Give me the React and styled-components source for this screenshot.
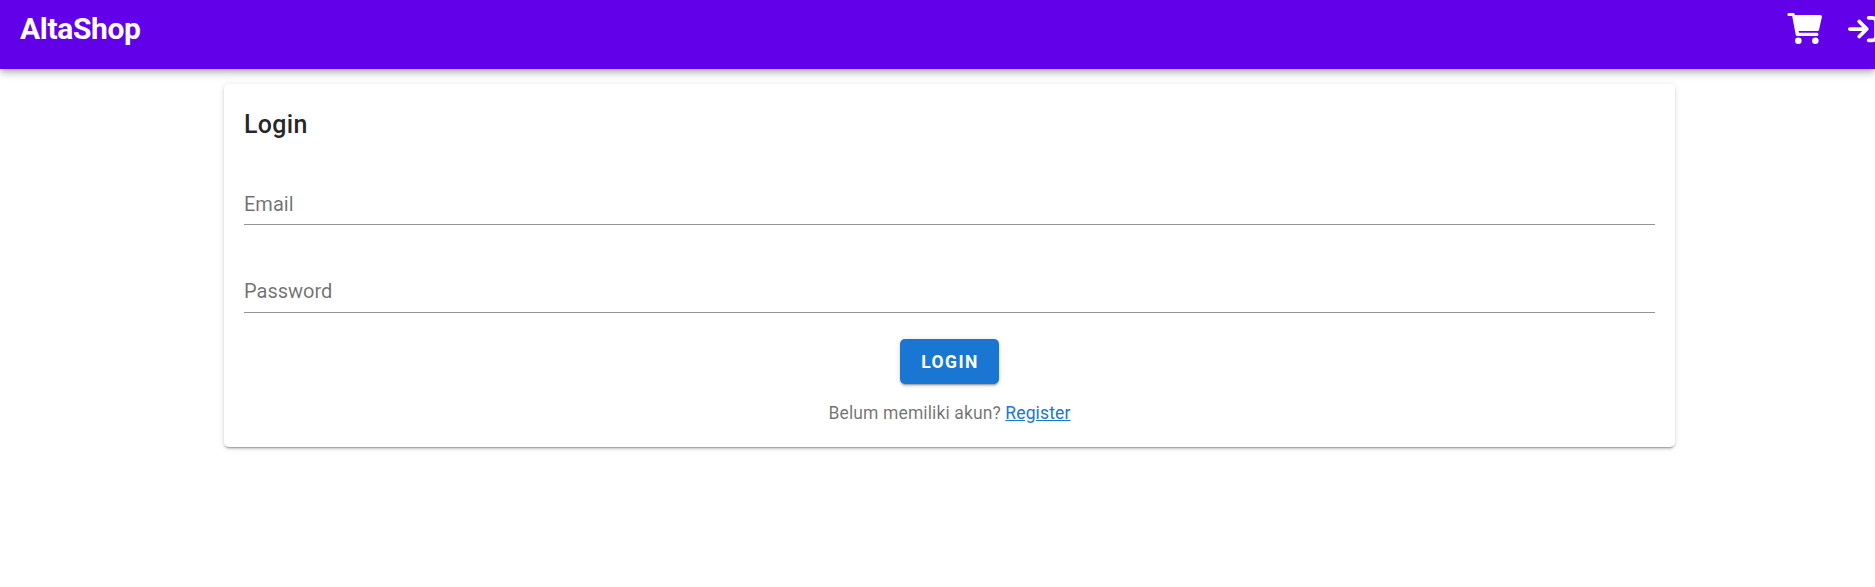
import React from "react";
import styled, { createGlobalStyle } from "styled-components";
import { FaArrowRightToBracket } from "react-icons/fa6";

const GlobalStyle = createGlobalStyle`
  *, *::before, *::after { box-sizing: border-box; }
  body {
    margin: 0;
    background: #fff;
    font-family: Roboto, "Liberation Sans", sans-serif;
  }
`;

const Page = styled.div`
  min-height: 100vh;
  overflow: hidden;
  background: #fff;
`;

const Header = styled.header`
  display: flex;
  justify-content: space-between;
  height: 69px;
  padding: 0 0 0 20px;
  background: #6200ea;
  color: #fff;
  box-shadow: 0 2.5px 5px -1.25px rgba(0, 0, 0, 0.2),
    0 5px 6.25px 0 rgba(0, 0, 0, 0.14), 0 1.25px 12.5px 0 rgba(0, 0, 0, 0.12);
`;

const Brand = styled.div`
  font-size: 30px;
  font-weight: 700;
  line-height: 57px;
  letter-spacing: -0.35px;
`;

const Actions = styled.nav`
  display: flex;
  align-items: center;
  gap: 26px;
  width: 88px;
  height: 57px;
  flex: none;
  overflow: hidden;
`;

const IconLink = styled.a`
  display: flex;
  flex: none;
  color: inherit;

  svg {
    display: block;
    height: ${({ $height }) => $height}px;
    width: ${({ $width }) => $width}px;
  }
`;

const Main = styled.main`
  display: flex;
  justify-content: center;
  padding: 15px 0 0 24px;
`;

const Card = styled.form`
  width: 1451px;
  height: 363px;
  padding: 20px;
  border-radius: 5px;
  background: #fff;
  box-shadow: 0 3px 1px -2px rgba(0, 0, 0, 0.2),
    0 2px 2px 0 rgba(0, 0, 0, 0.14), 0 1px 6px 0 rgba(0, 0, 0, 0.12);
`;

const Title = styled.h1`
  margin: 1px 0 34px;
  color: rgba(0, 0, 0, 0.87);
  font-size: 25px;
  font-weight: 500;
  line-height: 40px;
  letter-spacing: 0.3125px;
`;

const Field = styled.label`
  display: block;
  height: 46px;
  margin-bottom: ${({ $gap }) => $gap}px;
  padding-top: ${({ $inset }) => $inset}px;
  border-bottom: 1px solid #949494;
  color: rgba(0, 0, 0, 0.56);
  font-size: 20px;
  line-height: 30px;
`;

const Footer = styled.div`
  display: flex;
  flex-direction: column;
  align-items: center;
`;

const Button = styled.button`
  height: 45px;
  width: 99px;
  padding: 0 0 0 1px;
  border: 0;
  border-radius: 5px;
  background: #1976d2;
  color: #fff;
  font: 700 17.5px Roboto, sans-serif;
  letter-spacing: 1.45px;
  text-transform: uppercase;
  box-shadow: 0 3px 1px -2px rgba(0, 0, 0, 0.2),
    0 2px 2px 0 rgba(0, 0, 0, 0.14), 0 1px 6px 0 rgba(0, 0, 0, 0.12);
`;

const Hint = styled.p`
  margin: 17px 0 0;
  color: rgba(0, 0, 0, 0.56);
  font-size: 17.5px;
  line-height: 25px;
  letter-spacing: 0.12px;
`;

const Link = styled.a`
  color: #1976d2;
  text-decoration: underline;
`;

function CartIcon() {
  return (
    <svg viewBox="-1 0 105 93" fill="currentColor" aria-hidden="true">
      <path
        fillRule="evenodd"
        d="M4.5 0H18Q21 0 22 3L22.8 6H99Q104 6 103.8 11L95 51Q94.3 54 91 54H34L35 59.5H89Q93.5 59.5 93.5 64T89 69H29Q26 69 25.3 66L14.5 9H4.5A4.5 4.5 0 0 1 4.5 0Z"
      />
      <circle cx="33" cy="83" r="9.8" />
      <circle cx="84" cy="83" r="9.8" />
    </svg>
  );
}

export default function App() {
  return (
    <Page>
      <GlobalStyle />
      <Header>
        <Brand>AltaShop</Brand>
        <Actions>
          <IconLink $width={35} $height={31}><CartIcon /></IconLink>
          <IconLink $width={30} $height={30}><FaArrowRightToBracket /></IconLink>
        </Actions>
      </Header>
      <Main>
        <Card>
          <Title>Login</Title>
          <Field $gap={42} $inset={10}>Email</Field>
          <Field $gap={26} $inset={9}>Password</Field>
          <Footer>
            <Button type="button">Login</Button>
            <Hint>Belum memiliki akun? <Link href="#">Register</Link></Hint>
          </Footer>
        </Card>
      </Main>
    </Page>
  );
}
